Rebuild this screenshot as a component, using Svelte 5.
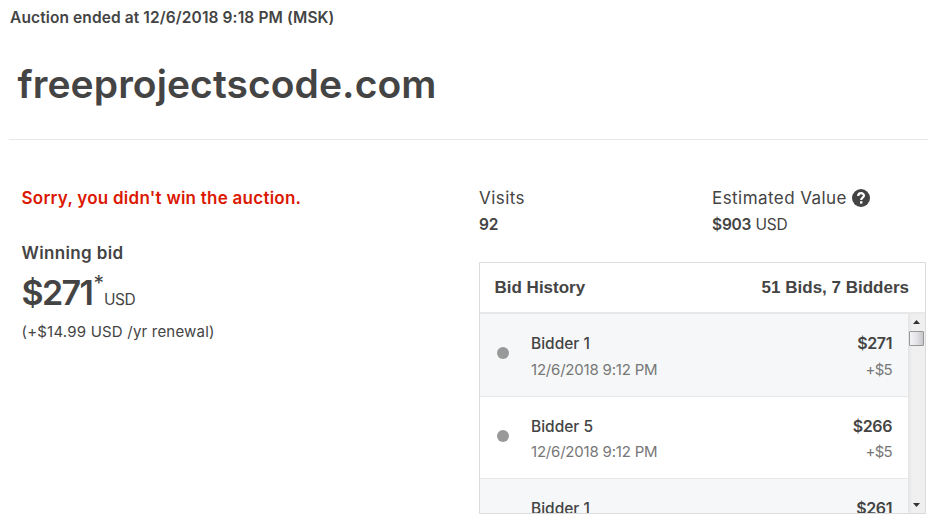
<script>
  let bids = [
    { bidder: 'Bidder 1', date: '12/6/2018 9:12 PM', amount: '$271', step: '+$5' },
    { bidder: 'Bidder 5', date: '12/6/2018 9:12 PM', amount: '$266', step: '+$5' },
    { bidder: 'Bidder 1', amount: '$261' }
  ]
</script>

<div class="auction">
  <div class="ended">Auction ended at 12/6/2018 9:18 PM (MSK)</div>
  <h1>freeprojectscode.com</h1>

  <div class="content">
    <div class="result">
      <div class="sorry">Sorry, you didn't win the auction.</div>
      <div class="label">Winning bid</div>
      <div class="price"><b>$271</b><sup>*</sup><span class="usd">USD</span></div>
      <div class="renewal">(+$14.99 USD /yr renewal)</div>
    </div>

    <div class="details">
      <div class="stats">
        <div class="stat">
          <div class="name">Visits</div>
          <div class="value"><b>92</b></div>
        </div>
        <div class="stat">
          <div class="name">
            <span>Estimated Value</span>
            <svg width="18" height="18" viewBox="0 0 18 18">
              <circle cx="9" cy="9" r="9" fill="#444" />
              <path d="M6.2 6.9C6.2 3.3 12 3.4 12 6.6C12 8.7 9.2 8.7 9.2 10.9" fill="none" stroke="#fff" stroke-width="2.2" />
              <rect x="8" y="12.2" width="2.4" height="2.4" fill="#fff" />
            </svg>
          </div>
          <div class="value"><b>$903</b> <span>USD</span></div>
        </div>
      </div>

      <div class="history">
        <div class="head">
          <span>Bid History</span>
          <span>51 Bids, 7 Bidders</span>
        </div>
        <div class="body">
          <div class="list">
            {#each bids as bid}
              <div class="bid">
                <i class="dot"></i>
                <div class="who">
                  <div class="bidder">{bid.bidder}</div>
                  {#if bid.date}
                    <div class="date">{bid.date}</div>
                  {/if}
                </div>
                <div class="sum">
                  <div class="amount">{bid.amount}</div>
                  {#if bid.step}
                    <div class="step">{bid.step}</div>
                  {/if}
                </div>
              </div>
            {/each}
          </div>
          <div class="scrollbar">
            <svg width="7" height="4" viewBox="0 0 7 4"><path d="M3.5 0L7 4H0z" fill="#333" /></svg>
            <div class="thumb"></div>
            <svg class="down" width="7" height="4" viewBox="0 0 7 4"><path d="M3.5 4L7 0H0z" fill="#333" /></svg>
          </div>
        </div>
      </div>
    </div>
  </div>
</div>

<style>
  :global(body) {
    background: #fff;
    overflow: hidden;
  }

  .auction {
    box-sizing: border-box;
    width: 938px;
    height: 520px;
    padding: 0 10px;
    overflow: hidden;
    font-family: Inter, "Liberation Sans", sans-serif;
    font-size: 16px;
    line-height: 26px;
    color: #444;
    white-space: nowrap;
  }

  .ended {
    height: 25px;
    padding-top: 5px;
    font-size: 15.5px;
    font-weight: 600;
    letter-spacing: 0.11px;
  }

  h1 {
    box-sizing: border-box;
    height: 110px;
    margin: 0 0 0 -1px;
    padding: 29px 0 0 8.5px;
    border-bottom: 1px solid #e8e8e8;
    font-size: 39px;
    line-height: 50px;
    font-weight: 600;
    letter-spacing: 0.08px;
  }

  .content {
    display: flex;
    padding: 45px 2px 0 11.5px;
  }

  .result {
    width: 457.5px;
  }

  .sorry {
    color: #db1802;
    font-size: 17px;
    font-weight: 600;
    letter-spacing: 0.25px;
  }

  .label {
    margin-top: 29px;
    font-size: 17px;
    font-weight: 600;
    letter-spacing: 0.36px;
  }

  .price {
    display: flex;
    align-items: flex-start;
    height: 53px;
  }

  .price b {
    font-size: 34px;
    line-height: 54px;
    font-weight: 600;
    letter-spacing: -1.6px;
  }

  .price sup {
    font-size: 21px;
    line-height: 35px;
    margin-left: 1px;
  }

  .usd {
    font-size: 15.5px;
    line-height: 67px;
    letter-spacing: -0.4px;
  }

  .renewal {
    font-size: 15px;
    line-height: 26px;
    letter-spacing: 0.2px;
  }

  .details {
    width: 447px;
  }

  .stats {
    display: flex;
  }

  .stat {
    flex: none;
    width: 233px;
  }

  .name {
    display: flex;
    align-items: center;
    gap: 5px;
    font-size: 17px;
    letter-spacing: 0.44px;
  }

  .value {
    height: 25px;
    padding-top: 1px;
    font-size: 15.5px;
    letter-spacing: -0.2px;
  }

  b {
    font-weight: 600;
  }

  .history {
    box-sizing: border-box;
    height: 252px;
    margin-top: 25px;
    border: 1px solid #dcdcdc;
    overflow: hidden;
  }

  .head {
    box-sizing: border-box;
    display: flex;
    justify-content: space-between;
    height: 51px;
    padding: 12px 16px 0 14.5px;
    border-bottom: 2px solid #e8e8e8;
    font-family: "Liberation Sans", Arial, sans-serif;
    font-size: 17px;
    font-weight: bold;
  }

  .body {
    display: flex;
    height: 199px;
  }

  .list {
    flex: 1;
    overflow: hidden;
  }

  .bid {
    box-sizing: border-box;
    display: flex;
    height: 82px;
    padding: 17px 16px 0 17px;
    border-bottom: 1px solid #e8e8e8;
  }

  .bid:first-child {
    height: 83px;
  }

  .bid:nth-child(odd) {
    background: #f5f7f8;
  }

  .dot {
    width: 12px;
    height: 12px;
    margin: 16px 22px 0 0;
    border-radius: 50%;
    background: #999;
  }

  .bid:last-child .dot {
    margin-top: 18px;
  }

  .who {
    flex: 1;
  }

  .bidder {
    font-size: 15.5px;
    font-weight: 500;
  }

  .sum {
    text-align: right;
  }

  .amount {
    margin-top: -1px;
    letter-spacing: -0.4px;
    font-weight: 600;
  }

  .date,
  .step {
    font-size: 15px;
    letter-spacing: -0.2px;
    color: #777;
  }

  .step {
    margin-top: 1px;
    letter-spacing: -0.7px;
  }

  .bid:nth-child(2) .date {
    margin-top: -1px;
  }

  .bid:nth-child(2) .step {
    margin-top: 0;
  }

  .scrollbar {
    box-sizing: border-box;
    display: flex;
    flex-direction: column;
    align-items: center;
    width: 17px;
    padding: 6px 1px 6px 0;
    background: linear-gradient(90deg, #e4e4e4, #f0f0f0 25%, #efefef);
  }

  .thumb {
    box-sizing: border-box;
    width: 15px;
    height: 15px;
    margin-top: 7px;
    border: 1px solid #979797;
    border-radius: 1px;
    background: linear-gradient(90deg, #f4f4f4, #e4e4e8 50%, #c8c8cc);
  }

  .down {
    margin-top: auto;
  }
</style>
